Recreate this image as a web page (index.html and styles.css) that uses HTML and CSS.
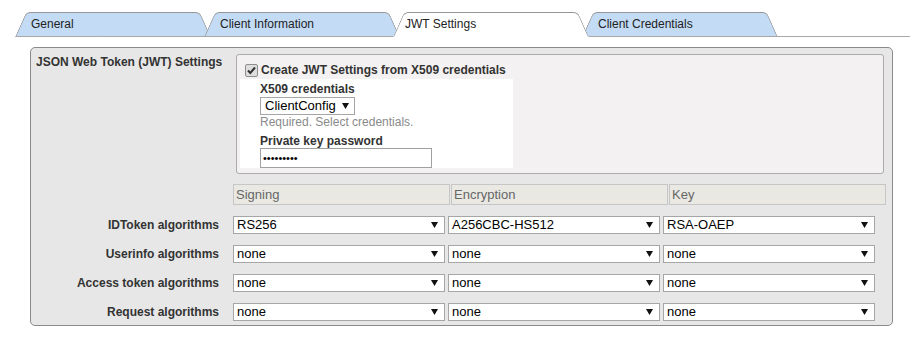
FILE: index.html
```html
<!DOCTYPE html>
<html lang="en">
<head>
    <meta charset="UTF-8">
    <title>JWT Settings</title>
    <link rel="stylesheet" href="styles.css">
</head>
<body>
    <div class="tabs">
        <div class="tab t1">General</div>
        <div class="tab t2">Client Information</div>
        <div class="tab active">JWT Settings</div>
        <div class="tab t4">Client Credentials</div>
        <div class="tab-fill"></div>
    </div>

    <div class="panel">
        <div class="row-label top">JSON Web Token (JWT) Settings</div>
        <div class="x509-box">
            <div class="check-line">
                <span class="check">
                    <svg width="11" height="11" viewBox="0 0 11 11"><path d="M2 5.5 L4.3 8 L9 2.5" fill="none" stroke="#333" stroke-width="2"/></svg>
                </span>
                Create JWT Settings from X509 credentials
            </div>
            <div class="x509-fields">
                <div class="field-label">X509 credentials</div>
                <div class="select small">
                    <span>ClientConfig</span>
                    <svg class="arrow" width="7" height="6" viewBox="0 0 7 6"><polygon points="0,0 7,0 3.5,6" fill="#111"/></svg>
                </div>
                <div class="hint">Required. Select credentials.</div>
                <div class="field-label spaced">Private key password</div>
                <input type="password" class="password" value="secret123">
            </div>
        </div>

        <div></div>
        <div class="alg-head">
            <div>Signing</div>
            <div>Encryption</div>
            <div>Key</div>
        </div>

        <div class="row-label">IDToken algorithms</div>
        <div class="alg-row">
            <div class="select"><span>RS256</span><svg class="arrow" width="7" height="6" viewBox="0 0 7 6"><polygon points="0,0 7,0 3.5,6" fill="#111"/></svg></div>
            <div class="select"><span>A256CBC-HS512</span><svg class="arrow" width="7" height="6" viewBox="0 0 7 6"><polygon points="0,0 7,0 3.5,6" fill="#111"/></svg></div>
            <div class="select"><span>RSA-OAEP</span><svg class="arrow" width="7" height="6" viewBox="0 0 7 6"><polygon points="0,0 7,0 3.5,6" fill="#111"/></svg></div>
        </div>

        <div class="row-label">Userinfo algorithms</div>
        <div class="alg-row">
            <div class="select"><span>none</span><svg class="arrow" width="7" height="6" viewBox="0 0 7 6"><polygon points="0,0 7,0 3.5,6" fill="#111"/></svg></div>
            <div class="select"><span>none</span><svg class="arrow" width="7" height="6" viewBox="0 0 7 6"><polygon points="0,0 7,0 3.5,6" fill="#111"/></svg></div>
            <div class="select"><span>none</span><svg class="arrow" width="7" height="6" viewBox="0 0 7 6"><polygon points="0,0 7,0 3.5,6" fill="#111"/></svg></div>
        </div>

        <div class="row-label">Access token algorithms</div>
        <div class="alg-row">
            <div class="select"><span>none</span><svg class="arrow" width="7" height="6" viewBox="0 0 7 6"><polygon points="0,0 7,0 3.5,6" fill="#111"/></svg></div>
            <div class="select"><span>none</span><svg class="arrow" width="7" height="6" viewBox="0 0 7 6"><polygon points="0,0 7,0 3.5,6" fill="#111"/></svg></div>
            <div class="select"><span>none</span><svg class="arrow" width="7" height="6" viewBox="0 0 7 6"><polygon points="0,0 7,0 3.5,6" fill="#111"/></svg></div>
        </div>

        <div class="row-label">Request algorithms</div>
        <div class="alg-row">
            <div class="select"><span>none</span><svg class="arrow" width="7" height="6" viewBox="0 0 7 6"><polygon points="0,0 7,0 3.5,6" fill="#111"/></svg></div>
            <div class="select"><span>none</span><svg class="arrow" width="7" height="6" viewBox="0 0 7 6"><polygon points="0,0 7,0 3.5,6" fill="#111"/></svg></div>
            <div class="select"><span>none</span><svg class="arrow" width="7" height="6" viewBox="0 0 7 6"><polygon points="0,0 7,0 3.5,6" fill="#111"/></svg></div>
        </div>
    </div>
</body>
</html>
```

FILE: styles.css
```css
* {
    margin: 0;
    padding: 0;
    box-sizing: border-box;
}

body {
    background-color: white;
    font-family: "Liberation Sans", Arial, sans-serif;
    font-size: 12px;
    color: #333;
    padding-top: 12px;
}

/* tab strip */
.tabs {
    display: flex;
    padding-left: 15px;
}

.tab {
    position: relative;
    width: 196px;
    height: 25px;
    margin-right: -7px;
    padding: 5px 0 0 16px;
    line-height: 14px;
    color: #222;
    z-index: 1;
}

.tab.t2 { z-index: 2; }
.tab.t4 { z-index: 3; }
.tab.active { z-index: 5; padding-left: 12px; }

.tab::before,
.tab::after {
    content: "";
    position: absolute;
    top: 0;
    bottom: 0;
    width: 55%;
    background-color: #c4dbf6;
    border-top: 1px solid #969696;
    border-bottom: 1px solid #a8a8a8;
    z-index: -1;
}

.tab::before {
    left: 0;
    border-left: 1px solid #969696;
    border-top-left-radius: 5px;
    transform-origin: bottom left;
    transform: skewX(-24deg);
}

.tab::after {
    right: 0;
    border-right: 1px solid #969696;
    border-top-right-radius: 5px;
    transform-origin: bottom right;
    transform: skewX(24deg);
}

.tab.active::before,
.tab.active::after {
    background-color: white;
    border-bottom-color: white;
}

.tab-fill {
    flex: 1;
    height: 25px;
    border-bottom: 1px solid #a8a8a8;
}

/* main panel */
.panel {
    display: grid;
    grid-template-columns: 202px 1fr;
    row-gap: 11px;
    align-items: center;
    width: 863px;
    margin: 10px 0 0 30px;
    padding: 6px 6px 4px 0;
    background-color: #e7e7e7;
    border: 1px solid #8a8a8a;
    border-radius: 5px;
}

.row-label {
    font-weight: bold;
    text-align: right;
    padding-right: 14px;
    line-height: 14px;
}

.row-label.top {
    align-self: start;
    text-align: left;
    padding: 1px 0 0 5px;
}

.x509-box {
    margin: 0 2px 0 3px;
    padding: 8px 0 5px 0;
    background-color: #f3f1f2;
    border: 1px solid #acacac;
    border-radius: 3px;
}

.check-line {
    display: flex;
    align-items: center;
    height: 14px;
    padding-left: 8px;
    font-weight: bold;
    line-height: 14px;
}

.check {
    display: inline-flex;
    width: 13px;
    height: 13px;
    margin-right: 3px;
    border: 1px solid #8e8e8e;
    border-radius: 2px;
    background-color: #dedede;
}

.x509-fields {
    width: 273px;
    margin: 2px 0 0 3px;
    padding: 3px 0 0 20px;
    background-color: white;
}

.field-label {
    font-weight: bold;
    line-height: 14px;
}

.field-label.spaced {
    margin-top: 5px;
}

.hint {
    color: #8a8a8a;
    line-height: 14px;
}

.password {
    display: block;
    width: 172px;
    height: 20px;
    padding: 0 2px;
    border: 1px solid #a0a0a0;
    font-family: "Liberation Sans", Arial, sans-serif;
    font-size: 11px;
    color: #000;
    outline: none;
}

/* select look-alikes */
.select {
    display: flex;
    align-items: center;
    justify-content: space-between;
    height: 18px;
    padding: 0 6px 0 3px;
    background-color: white;
    border: 1px solid #a6a6a6;
    font-size: 13px;
    line-height: 16px;
    color: #000;
}

.select.small {
    display: inline-flex;
    width: 95px;
    margin-top: 1px;
    padding: 0 5px 0 4px;
}

.arrow {
    flex-shrink: 0;
}

/* algorithm table */
.alg-head {
    display: grid;
    grid-template-columns: repeat(3, 217px);
    column-gap: 1px;
    margin-top: -1px;
}

.alg-head div {
    height: 21px;
    padding-left: 2px;
    background-color: #e9e8e3;
    border: 1px solid #c6c6c6;
    font-size: 13px;
    line-height: 19px;
    color: #666;
}

.alg-row {
    display: grid;
    grid-template-columns: repeat(3, 212px);
    column-gap: 3px;
}
```
